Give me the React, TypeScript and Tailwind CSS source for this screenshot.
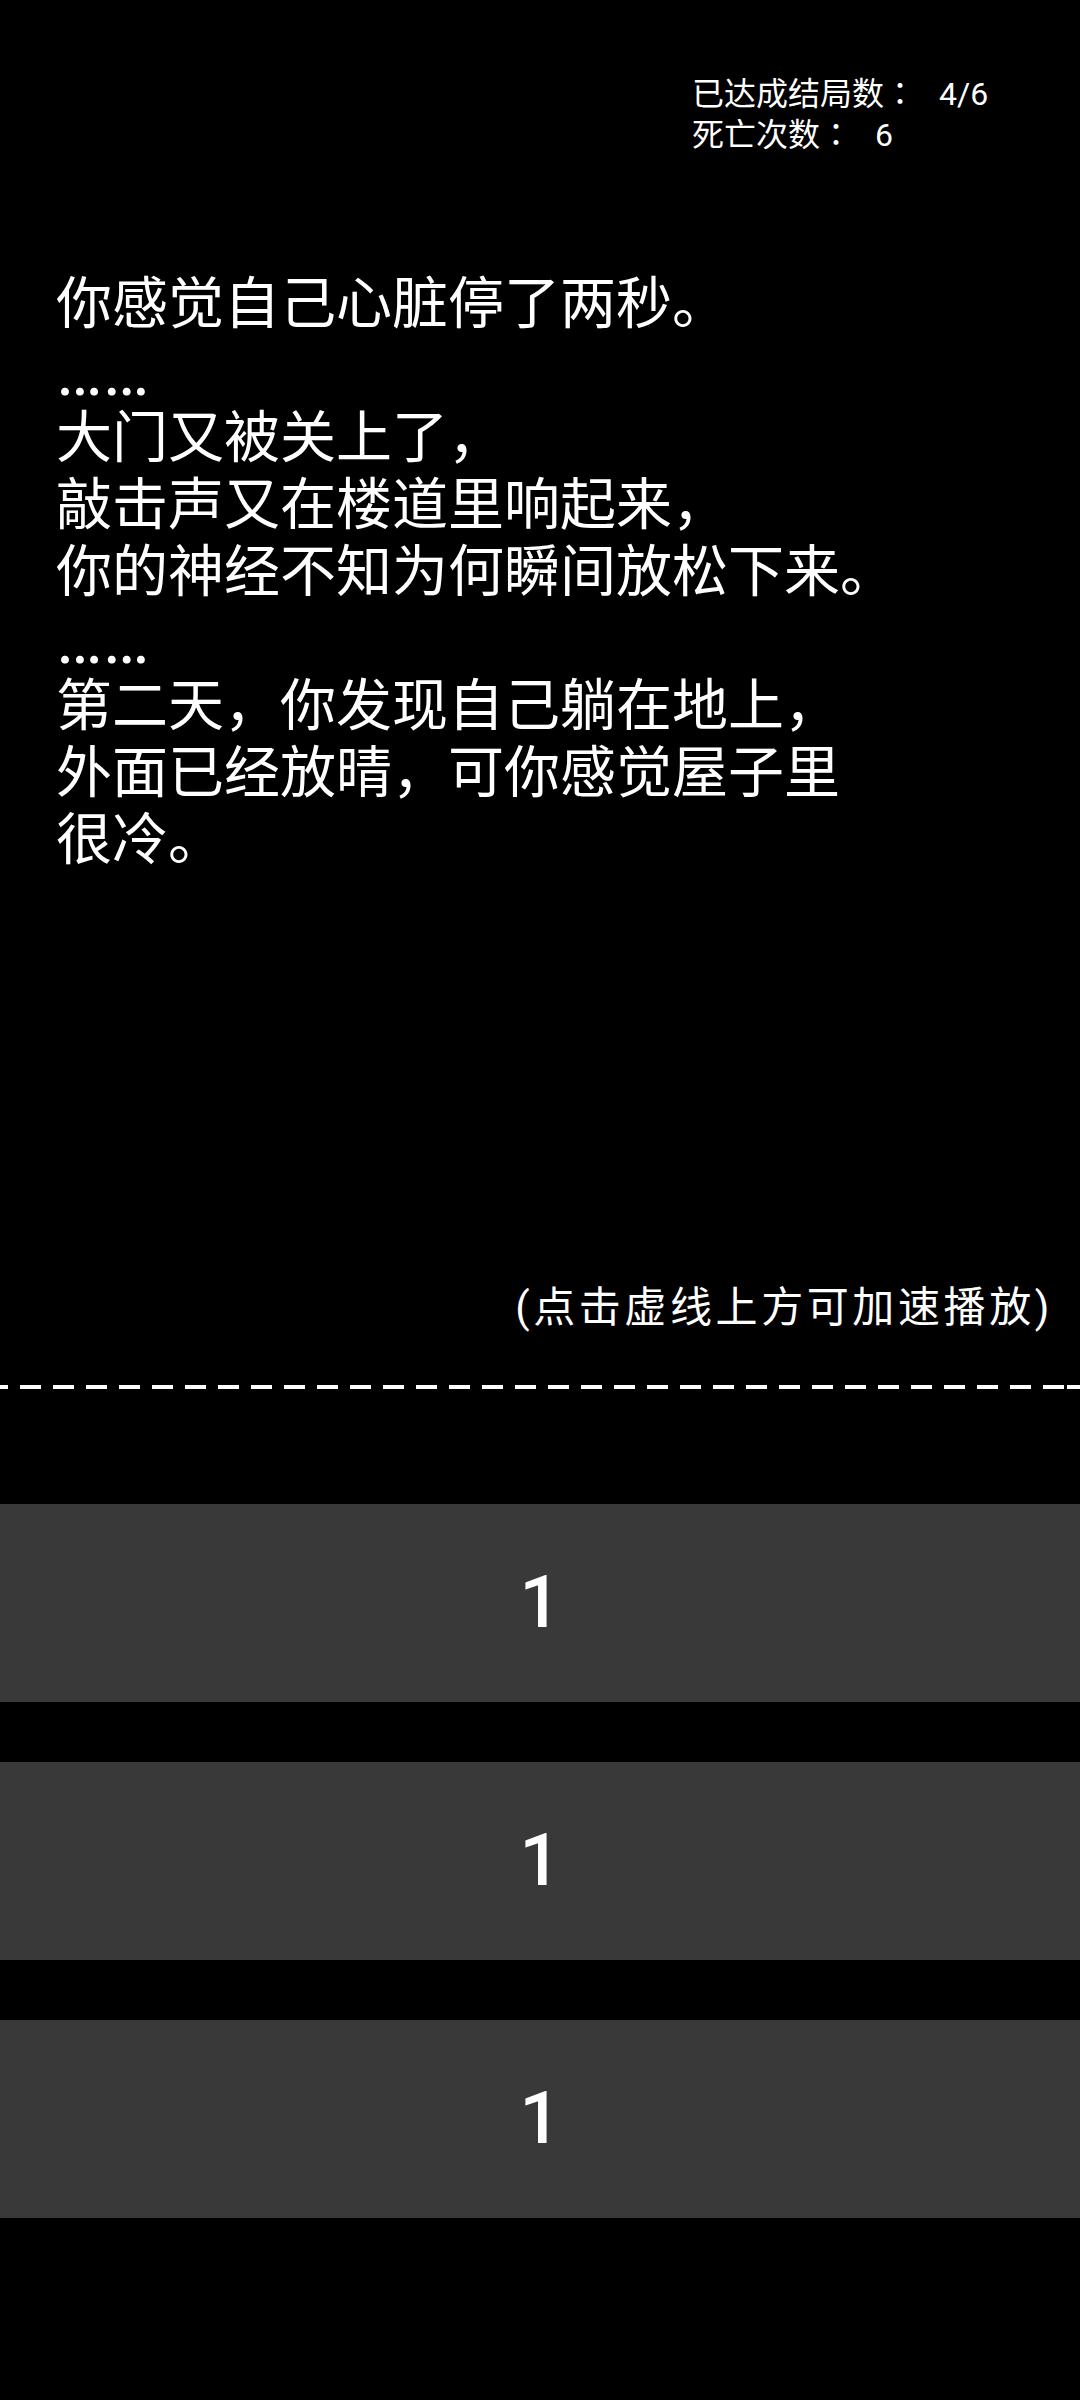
const lines = [
  "你感觉自己心脏停了两秒。",
  "……",
  "大门又被关上了，",
  "敲击声又在楼道里响起来，",
  "你的神经不知为何瞬间放松下来。",
  "……",
  "第二天，你发现自己躺在地上，",
  "外面已经放晴，可你感觉屋子里",
  "很冷。",
];

const choices = ["1", "1", "1"];

function Stat({ label, value }: { label: string; value: string }) {
  return (
    <div className="h-[41px]">
      {label}
      <span className="font-['Noto_Sans_CJK_TC',sans-serif]">：</span>
      <span className="ml-[23px]">{value}</span>
    </div>
  );
}

export default function App() {
  return (
    <div className="min-h-[2400px] w-full bg-black text-white font-['Roboto','Noto_Sans_CJK_SC',sans-serif]">
      {/* stats */}
      <div className="pl-[692px] pt-[71px] text-[32px] leading-[41px]">
        <Stat label="已达成结局数" value="4/6" />
        <Stat label="死亡次数" value="6" />
      </div>

      {/* story text */}
      <div className="mt-[118px] pl-[56px] text-[56px] leading-[67px]">
        {lines.map((line, i) =>
          line === "……" ? (
            <div key={i} className="h-[67px] text-[70px] leading-[67px]">
              {line}
            </div>
          ) : (
            <div key={i} className="h-[67px]">
              {line}
            </div>
          )
        )}
      </div>

      {/* hint */}
      <div className="mt-[408px] flex h-[52px] justify-end pr-[27px]">
        <span className="text-[42px] leading-[52px] tracking-[3.6px]">(点击虚线上方可加速播放)</span>
      </div>

      {/* dashed divider */}
      <div className="mt-[51px] h-[4px] w-full bg-[repeating-linear-gradient(90deg,#ffffff_0_21px,transparent_21px_33px)] bg-[position:-13px_0]" />

      {/* choices */}
      <div className="mt-[115px] flex flex-col gap-[60px]">
        {choices.map((c, i) => (
          <button
            key={i}
            className="flex h-[198px] w-full items-center justify-center bg-[#393939] text-[72px] font-medium leading-none text-white"
          >
            {c}
          </button>
        ))}
      </div>
    </div>
  );
}
